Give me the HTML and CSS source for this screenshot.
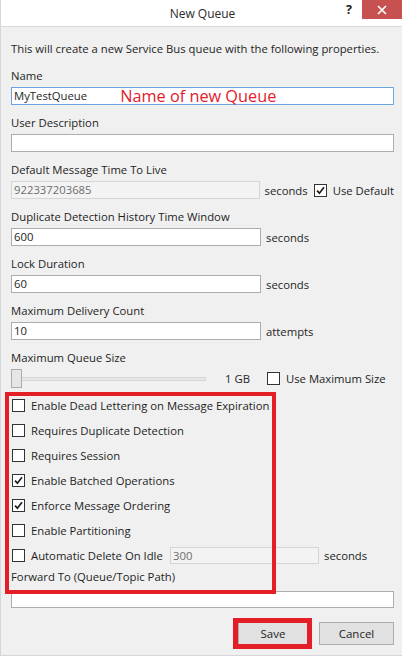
FILE: index.html
```html
<!DOCTYPE html>
<html lang="en">
<head>
<meta charset="utf-8">
<title>New Queue</title>
<link rel="stylesheet" href="styles.css">
</head>
<body>
<div class="window">
  <header class="titlebar">
    <span class="title">New Queue</span>
    <span class="help">?</span>
    <span class="close">
      <svg width="10" height="10" viewBox="0 0 10 10"><path d="M1 1 L9 9 M9 1 L1 9" stroke="#fff" stroke-width="1.6" fill="none"/></svg>
    </span>
  </header>

  <main class="content">
    <p class="intro">This will create a new Service Bus queue with the following properties.</p>

    <div class="field">
      <div class="label">Name</div>
      <div class="textbox wide focused"><span>MyTestQueue</span><span class="note">Name of new Queue</span></div>
    </div>

    <div class="field">
      <div class="label">User Description</div>
      <div class="textbox wide"></div>
    </div>

    <div class="field">
      <div class="label">Default Message Time To Live</div>
      <div class="row">
        <div class="textbox mid disabled">922337203685</div>
        <span class="unit">seconds</span>
        <span class="checkbox checked inline"><svg width="13" height="13" viewBox="0 0 13 13"><path d="M3 6.6 L5.4 9.2 L10 3.2" stroke="#1e1e1e" stroke-width="1.7" fill="none"/></svg></span>
        <span class="check-text">Use Default</span>
      </div>
    </div>

    <div class="field">
      <div class="label">Duplicate Detection History Time Window</div>
      <div class="row">
        <div class="textbox mid">600</div>
        <span class="unit">seconds</span>
      </div>
    </div>

    <div class="field">
      <div class="label">Lock Duration</div>
      <div class="row">
        <div class="textbox mid">60</div>
        <span class="unit">seconds</span>
      </div>
    </div>

    <div class="field">
      <div class="label">Maximum Delivery Count</div>
      <div class="row">
        <div class="textbox mid">10</div>
        <span class="unit">attempts</span>
      </div>
    </div>

    <div class="field size-field">
      <div class="label">Maximum Queue Size</div>
      <div class="row slider-row">
        <div class="slider-area">
          <div class="slider">
            <span class="thumb"></span>
            <span class="track"></span>
          </div>
          <span class="size-value">1 GB</span>
        </div>
        <span class="checkbox inline"></span>
        <span class="check-text">Use Maximum Size</span>
      </div>
    </div>

    <ul class="options">
      <li class="option"><span class="checkbox"></span><span class="check-text">Enable Dead Lettering on Message Expiration</span></li>
      <li class="option"><span class="checkbox"></span><span class="check-text">Requires Duplicate Detection</span></li>
      <li class="option"><span class="checkbox"></span><span class="check-text">Requires Session</span></li>
      <li class="option"><span class="checkbox checked"><svg width="13" height="13" viewBox="0 0 13 13"><path d="M3 6.6 L5.4 9.2 L10 3.2" stroke="#1e1e1e" stroke-width="1.7" fill="none"/></svg></span><span class="check-text">Enable Batched Operations</span></li>
      <li class="option"><span class="checkbox checked"><svg width="13" height="13" viewBox="0 0 13 13"><path d="M3 6.6 L5.4 9.2 L10 3.2" stroke="#1e1e1e" stroke-width="1.7" fill="none"/></svg></span><span class="check-text">Enforce Message Ordering</span></li>
      <li class="option"><span class="checkbox"></span><span class="check-text">Enable Partitioning</span></li>
      <li class="option"><span class="checkbox"></span><span class="check-text idle-text">Automatic Delete On Idle</span><div class="textbox short disabled">300</div><span class="unit">seconds</span></li>
    </ul>

    <div class="forward">
      <div class="label">Forward To (Queue/Topic Path)</div>
      <div class="textbox wide forward-box"></div>
    </div>

    <div class="buttons">
      <button class="btn save">Save</button>
      <button class="btn">Cancel</button>
    </div>
  </main>

  <div class="mark mark-options"></div>
  <div class="mark mark-save"></div>
</div>
</body>
</html>
```

FILE: styles.css
```css
* { box-sizing: border-box; }

html, body {
  margin: 0;
  padding: 0;
  background: #ffffff;
}

body {
  font-family: "Open Sans", "Noto Sans", sans-serif;
  font-size: 11.3px;
  color: #1e1e1e;
}

.window {
  position: relative;
  width: 402px;
  height: 656px;
  background: #f0f0f0;
  border-left: 1px solid #d6d6d6;
  border-bottom: 1px solid #d6d6d6;
}

/* title bar */
.titlebar {
  position: relative;
  height: 27px;
  background: #ffffff;
  border-bottom: 1px solid #dadada;
  display: flex;
  align-items: center;
  justify-content: center;
}

.title {
  font-size: 12px;
  color: #2b2b2b;
  margin-left: 2px;
}

.help {
  position: absolute;
  left: 345px;
  top: 1px;
  font-weight: bold;
  font-size: 12.5px;
  color: #222;
}

.close {
  position: absolute;
  right: 0;
  top: 0;
  width: 40px;
  height: 19px;
  background: #c75050;
  display: flex;
  align-items: center;
  justify-content: center;
}

/* form body */
.content {
  padding: 14px 8px 0 10px;
}

.intro {
  margin: 0 0 11px;
  line-height: 16px;
  height: 16px;
}

.label {
  line-height: 16px;
  height: 16px;
  margin-bottom: 3px;
}

.field {
  margin-bottom: 10px;
}

.row {
  display: flex;
  align-items: center;
}

.textbox {
  height: 18px;
  background: #ffffff;
  border: 1px solid #abadb3;
  padding: 0 2px;
  line-height: 16px;
  display: flex;
  align-items: center;
  white-space: nowrap;
}

.textbox.wide { width: 383px; }
.textbox.mid { width: 250px; }
.textbox.short { width: 149px; height: 17px; margin-left: 6px; }

.textbox.focused { border-color: #6aa6e0; }

.textbox.disabled {
  background: #f3f3f3;
  border-color: #d5d5d5;
  color: #6d6d6d;
}

.note {
  color: #e2202c;
  font-size: 16.3px;
  margin-left: 33px;
  line-height: 16px;
}

.unit {
  margin-left: 5px;
}

.check-text {
  margin-left: 6px;
  white-space: nowrap;
}

.checkbox {
  width: 13px;
  height: 13px;
  border: 1px solid #333333;
  background: #ffffff;
  display: inline-flex;
  flex: none;
  position: relative;
}

.checkbox svg {
  position: absolute;
  left: -1px;
  top: -1px;
}

.checkbox.inline { margin-left: 6px; }

/* size slider */
.size-field { margin-bottom: 5px; }

.slider-row { height: 19px; }

.slider-area {
  width: 250px;
  display: flex;
  align-items: center;
  justify-content: space-between;
  padding-right: 11px;
}

.slider {
  width: 195px;
  height: 19px;
  display: flex;
  align-items: center;
}

.thumb {
  width: 11px;
  height: 19px;
  background: #e6e6e6;
  border: 1px solid #acacac;
  flex: none;
}

.track {
  flex: 1;
  height: 4px;
  background: #e7e7e7;
  border: 1px solid #d6d6d6;
  border-left: none;
}

.size-value { white-space: nowrap; }

/* option list */
.options {
  list-style: none;
  margin: 0;
  padding: 0;
}

.option {
  height: 25px;
  display: flex;
  align-items: center;
  padding-left: 1px;
}

.idle-text { width: 133px; }

.forward {
  margin-top: 1px;
}

.forward .label { margin-bottom: 6px; }

.forward-box { height: 17px; }

/* buttons */
.buttons {
  display: flex;
  justify-content: flex-end;
  margin-top: 14px;
}

.btn {
  font-family: inherit;
  font-size: 11.5px;
  color: #1e1e1e;
  height: 23px;
  width: 75px;
  background: #e1e1e1;
  border: 1px solid #adadad;
  padding: 0;
  line-height: 21px;
}

.btn.save {
  width: 70px;
  margin-right: 11px;
}

/* red highlight frames */
.mark {
  position: absolute;
  border: 4px solid #e41e26;
  pointer-events: none;
}

.mark-options {
  left: 4px;
  top: 392px;
  width: 271px;
  height: 202px;
}

.mark-save {
  left: 232px;
  top: 618px;
  width: 79px;
  height: 31px;
  border-width: 5px;
}
```
